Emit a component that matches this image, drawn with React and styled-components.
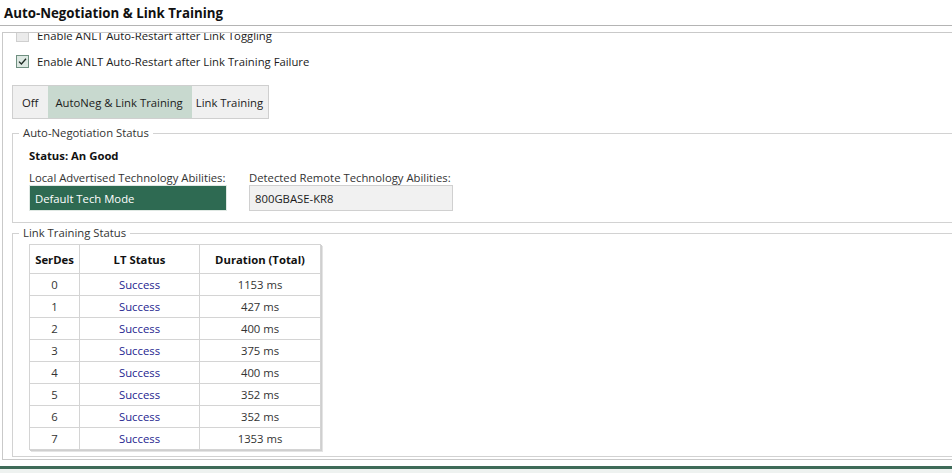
import React from "react";
import styled, { createGlobalStyle } from "styled-components";

const Global = createGlobalStyle`
  html, body { margin: 0; padding: 0; background: #fff; overflow: hidden; }
  body { font-family: "Open Sans", "Noto Sans", sans-serif; font-size: 11.3px; color: #1b1b1b; }
  #root { width: 952px; height: 473px; }
`;

const Page = styled.div`
  width: 952px;
  height: 473px;
  display: flex;
  flex-direction: column;
  overflow: hidden;
`;

const Header = styled.div`
  height: 26px;
  box-sizing: border-box;
  border-bottom: 1px solid #b4b4b4;
  padding: 4px 0 0 4px;
  font-weight: 700;
  font-size: 13.3px;
  color: #111;
`;

const ScrollPanel = styled.div`
  margin: 6px -2px 0 2px;
  height: 428px;
  flex: none;
  box-sizing: border-box;
  border: 1px solid #c9c9c9;
  overflow: hidden;
`;

const Content = styled.div`
  margin-top: -8px;
  display: flex;
  flex-direction: column;
`;

const CheckRow = styled.label`
  display: flex;
  align-items: center;
  height: 20px;
  padding-left: 13px;
  gap: 8px;
  margin-top: ${p => p.$mt || 0}px;
`;

const Box = styled.span`
  width: 11px;
  height: 11px;
  border: 1px solid ${p => (p.$checked ? "#6f8f80" : "#cfcfcf")};
  background: ${p => (p.$checked ? "#dde8e2" : "#ebebeb")};
  display: flex;
  align-items: center;
  justify-content: center;
`;

const Segments = styled.div`
  display: flex;
  align-self: flex-start;
  margin: 14px 0 0 9px;
  height: 34px;
  box-sizing: border-box;
  border: 1px solid #cfcfcf;
  background: #f0f0f0;
`;

const Segment = styled.div`
  display: flex;
  align-items: center;
  padding: 0 ${p => p.$pr ?? 4}px 0 ${p => p.$pl ?? 4}px;
  background: ${p => (p.$active ? "#c8d9cf" : "transparent")};
  color: #1b1b1b;
`;

const Group = styled.div`
  position: relative;
  margin: ${p => p.$mt}px 0 0 9px;
  border: 1px solid #d2d2d2;
  height: ${p => p.$h}px;
  box-sizing: border-box;
  padding: ${p => p.$pt}px 0 0 16px;
`;

const Legend = styled.span`
  position: absolute;
  top: -9px;
  left: 6px;
  padding: 0 4px;
  background: #fff;
  line-height: 16px;
  color: #333;
`;

const StatusLine = styled.div`
  font-weight: 700;
  line-height: 16px;
  color: #111;
`;

const AbilityRow = styled.div`
  display: flex;
  gap: 22px;
  margin-top: 6px;
`;

const Ability = styled.div`
  display: flex;
  flex-direction: column;
  width: ${p => p.$w}px;
`;

const AbilityLabel = styled.div`
  line-height: 15px;
  color: #333;
  white-space: nowrap;
`;

const AbilityValue = styled.div`
  height: 26px;
  box-sizing: border-box;
  display: flex;
  align-items: center;
  padding-left: 5px;
  border: 1px solid ${p => (p.$accent ? "#dfe8e3" : "#d0d0d0")};
  background: ${p => (p.$accent ? "#2e6a52" : "#f1f1f1")};
  color: ${p => (p.$accent ? "#fff" : "#1b1b1b")};
`;

const Table = styled.div`
  display: grid;
  grid-template-columns: 50px 120px 121px;
  width: 291px;
  border-top: 1px solid #d4d4d4;
  border-left: 1px solid #d4d4d4;
  box-shadow: 1px 1px 0 #cfcfcf, 2px 2px 0 #e4e4e4;
`;

const Cell = styled.div`
  height: ${p => (p.$head ? 29 : 22)}px;
  box-sizing: border-box;
  display: flex;
  align-items: center;
  justify-content: center;
  border-right: 1px solid #d4d4d4;
  border-bottom: 1px solid #d4d4d4;
  font-weight: ${p => (p.$head ? 700 : 400)};
  color: ${p => (p.$link ? "#24248f" : p.$head ? "#111" : "#333")};
`;

const Footer = styled.div`
  margin-top: 6px;
  flex: 1;
  border-top: 3px solid #3e6b58;
  background: #eef2f0;
`;

const rows = [
  [0, "1153 ms"],
  [1, "427 ms"],
  [2, "400 ms"],
  [3, "375 ms"],
  [4, "400 ms"],
  [5, "352 ms"],
  [6, "352 ms"],
  [7, "1353 ms"],
];

const Check = () => (
  <svg width="9" height="9" viewBox="0 0 9 9">
    <path d="M1 4.6 L3.4 7 L8 1.8" fill="none" stroke="#1e2a24" strokeWidth="1.3" />
  </svg>
);

export default function App() {
  return (
    <Page>
      <Global />
      <Header>Auto-Negotiation &amp; Link Training</Header>
      <ScrollPanel>
        <Content>
          <CheckRow>
            <Box />
            <span>Enable ANLT Auto-Restart after Link Toggling</span>
          </CheckRow>
          <CheckRow $mt={6}>
            <Box $checked>
              <Check />
            </Box>
            <span>Enable ANLT Auto-Restart after Link Training Failure</span>
          </CheckRow>
          <Segments>
            <Segment $pl={9} $pr={10}>Off</Segment>
            <Segment $active $pl={7} $pr={9}>AutoNeg &amp; Link Training</Segment>
            <Segment $pl={4} $pr={5}>Link Training</Segment>
          </Segments>
          <Group $mt={14} $h={90} $pt={14}>
            <Legend>Auto-Negotiation Status</Legend>
            <StatusLine>Status: An Good</StatusLine>
            <AbilityRow>
              <Ability $w={198}>
                <AbilityLabel>Local Advertised Technology Abilities:</AbilityLabel>
                <AbilityValue $accent>Default Tech Mode</AbilityValue>
              </Ability>
              <Ability $w={204}>
                <AbilityLabel>Detected Remote Technology Abilities:</AbilityLabel>
                <AbilityValue>800GBASE-KR8</AbilityValue>
              </Ability>
            </AbilityRow>
          </Group>
          <Group $mt={10} $h={224} $pt={10}>
            <Legend>Link Training Status</Legend>
            <Table>
              <Cell $head>SerDes</Cell>
              <Cell $head>LT Status</Cell>
              <Cell $head>Duration (Total)</Cell>
              {rows.map(([i, d]) => (
                <React.Fragment key={i}>
                  <Cell>{i}</Cell>
                  <Cell $link>Success</Cell>
                  <Cell>{d}</Cell>
                </React.Fragment>
              ))}
            </Table>
          </Group>
        </Content>
      </ScrollPanel>
      <Footer />
    </Page>
  );
}
